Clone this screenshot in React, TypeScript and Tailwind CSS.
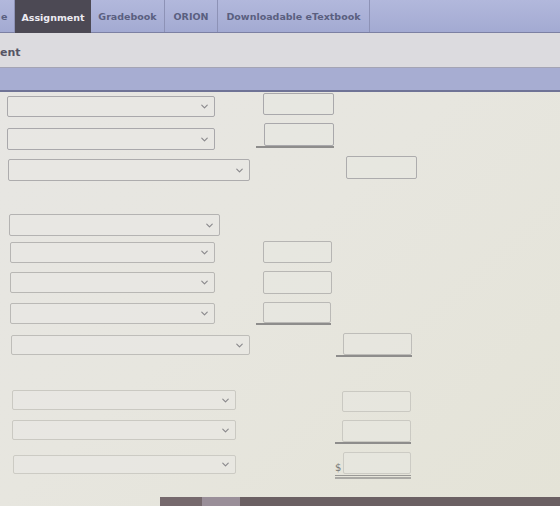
import { ChevronDown } from "lucide-react";

// ── Form rows ────────────────────────────────────────────────────────────────
// Each row: a dropdown on the left and (optionally) an amount box on the right.
// Class strings are spelled out so Tailwind picks them up.

type Row = {
  h: string;        // row height (distance to the next row)
  sel: string;      // dropdown offset / width / vertical nudge
  tone: string;     // border tone (fades toward the bottom of the sheet)
  cell?: string;    // amount cell offset / width
  box?: string;     // amount box width / vertical nudge
  rule?: "single" | "double";
  dollar?: boolean;
};

const ROWS: Row[] = [
  { h: "h-[30px]", sel: "ml-[7px] w-[208px] mt-[3px] h-[21px]", tone: "border-[#a9a8ab]", cell: "ml-[48px] w-[71px]", box: "w-[71px] h-[22px]" },
  { h: "h-[33px]", sel: "ml-[7px] w-[208px] mt-[5px] h-[22px]", tone: "border-[#a9a8ab]", cell: "ml-[41px] w-[78px]", box: "w-[70px] h-[23px]", rule: "single" },
  { h: "h-[58px]", sel: "ml-[8px] w-[242px] mt-[3px] h-[22px]", tone: "border-[#adacad]", cell: "ml-[96px] w-[71px]", box: "w-[71px] h-[23px]" },
  { h: "h-[27px]", sel: "ml-[9px] w-[211px] mt-0 h-[22px]", tone: "border-[#b4b3b2]" },
  { h: "h-[30px]", sel: "ml-[10px] w-[205px] mt-px h-[21px]", tone: "border-[#b6b5b3]", cell: "ml-[48px] w-[69px]", box: "w-[69px] h-[22px]" },
  { h: "h-[31px]", sel: "ml-[10px] w-[205px] mt-px h-[21px]", tone: "border-[#b8b7b4]", cell: "ml-[48px] w-[69px]", box: "w-[69px] h-[23px]" },
  { h: "h-[31px]", sel: "ml-[10px] w-[205px] mt-px h-[21px]", tone: "border-[#bab9b6]", cell: "ml-[41px] w-[75px]", box: "w-[68px] h-[21px]", rule: "single" },
  { h: "h-[57px]", sel: "ml-[11px] w-[239px] mt-[2px] h-[20px]", tone: "border-[#bebdb9]", cell: "ml-[86px] w-[76px]", box: "w-[69px] h-[22px]", rule: "single" },
  { h: "h-[30px]", sel: "ml-[12px] w-[224px] mt-0 h-[20px]", tone: "border-[#cac9c2]", cell: "ml-[106px] w-[69px] mt-px", box: "w-[69px] h-[21px]" },
  { h: "h-[32px]", sel: "ml-[12px] w-[224px] mt-0 h-[20px]", tone: "border-[#cac9c2]", cell: "ml-[99px] w-[76px]", box: "w-[69px] h-[22px]", rule: "single" },
  { h: "h-[45px]", sel: "ml-[13px] w-[223px] mt-[3px] h-[19px]", tone: "border-[#cccbc4]", cell: "ml-[99px] w-[76px]", box: "w-[68px] h-[22px]", rule: "double", dollar: true },
];

function Dropdown({ cls, tone }: { cls: string; tone: string }) {
  return (
    <div className={`${cls} ${tone} shrink-0 border rounded-[2px] bg-[#e9e8e4]/60 flex items-center justify-end pr-[4px]`}>
      <ChevronDown className="w-[11px] h-[11px] text-[#8a898c]" strokeWidth={2.5} />
    </div>
  );
}

function AmountCell({ row }: { row: Row }) {
  return (
    <div className={`${row.cell} shrink-0 flex flex-col items-end`}>
      <div className="flex items-end w-full justify-end">
        {row.dollar && (
          <span className="mr-auto text-[10px] leading-none text-[#7a7a78] font-['DejaVu_Sans',sans-serif] mb-px">$</span>
        )}
        <div className={`${row.box} ${row.tone} border rounded-[2px] bg-[#e8e7e2]/50`} />
      </div>
      {row.rule === "single" && <div className="w-full h-[2px] bg-[#8e8d8c]" />}
      {row.rule === "double" && (
        <div className="w-full mt-[1px] flex flex-col gap-[1px]">
          <div className="h-px bg-[#9a9996]" />
          <div className="h-[2px] bg-[#aaa9a5]" />
        </div>
      )}
    </div>
  );
}

function FormRow({ row }: { row: Row }) {
  return (
    <div className={`${row.h} flex items-start`}>
      <Dropdown cls={row.sel} tone={row.tone} />
      {row.cell && <AmountCell row={row} />}
    </div>
  );
}

// ── Navigation ───────────────────────────────────────────────────────────────

function Tabs() {
  return (
    <div className="h-[33px] bg-linear-to-b from-[#b2b8dc] to-[#a3aad2] border-b border-[#7c80a3] flex items-stretch font-['DejaVu_Sans',sans-serif] font-bold text-[9.5px] text-[#5a5f80]">
      <div className="w-[15px] flex items-center pt-[3px] pl-px border-r border-[#8d92b6]">e</div>
      <div className="w-[76px] -mb-[2px] pt-[3px] bg-[#4c4954] text-[#ecebf2] flex items-center justify-center">
        Assignment
      </div>
      <div className="w-[74px] pt-[3px] flex items-center justify-center border-r border-[#8d92b6]">Gradebook</div>
      <div className="w-[53px] pt-[3px] flex items-center justify-center border-r border-[#8d92b6]">ORION</div>
      <div className="w-[152px] pt-[3px] flex items-center justify-center border-r border-[#8d92b6]">Downloadable eTextbook</div>
      <div className="flex-1" />
    </div>
  );
}

export default function App() {
  return (
    <div className="w-[560px] h-[506px] overflow-hidden flex flex-col bg-linear-to-br from-[#e7e6e4] via-[#e7e6df] to-[#e4e3d7]">
      <Tabs />
      <div className="h-[35px] bg-[#dcdbdf] border-b border-[#a4a4b4] flex items-center font-['DejaVu_Sans',sans-serif] font-bold text-[11px] text-[#565565]">
        <span className="pt-[7px]">ent</span>
      </div>
      <div className="h-[24px] bg-[#a7add2] border-b-2 border-[#6f7396]" />

      <div className="pt-px flex flex-col">
        {ROWS.map((row, i) => (
          <FormRow key={i} row={row} />
        ))}
      </div>

      {/* taskbar edge */}
      <div className="mt-auto h-[9px] flex">
        <div className="w-[160px]" />
        <div className="w-[42px] bg-[#76696d]" />
        <div className="w-[38px] bg-[#9a8f99]" />
        <div className="flex-1 bg-[#6b6063]" />
      </div>
    </div>
  );
}
